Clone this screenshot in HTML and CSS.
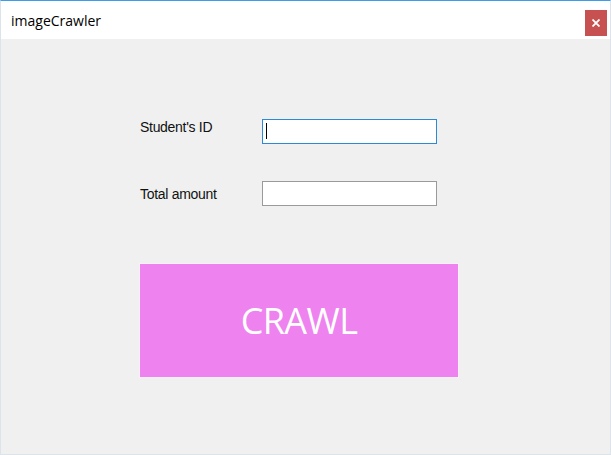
FILE: index.html
```html
<!DOCTYPE html>
<html lang="en">
<head>
    <meta charset="UTF-8">
    <title>imageCrawler</title>
    <link rel="stylesheet" href="styles.css">
</head>
<body>
    <div class="window">
        <div class="title-bar">
            <span class="title-text">imageCrawler</span>
            <button class="close-button" aria-label="Close">
                <svg width="8" height="8" viewBox="0 0 8 8">
                    <path d="M0.5 0.5 L7.5 7.5 M7.5 0.5 L0.5 7.5" stroke="#fff" stroke-width="1.8"/>
                </svg>
            </button>
        </div>

        <div class="client">
            <div class="form">
                <label class="field-label">Student's ID</label>
                <div class="textbox focused"><span class="caret"></span></div>

                <label class="field-label lower">Total amount</label>
                <div class="textbox"></div>
            </div>

            <button class="crawl-button">CRAWL</button>
        </div>
    </div>
</body>
</html>
```

FILE: styles.css
```css
* {
    margin: 0;
    padding: 0;
    box-sizing: border-box;
}

body {
    width: 611px;
    height: 455px;
    overflow: hidden;
    background: #f0f0f0;
    font-family: "Liberation Sans", Arial, sans-serif;
}

.window {
    width: 611px;
    height: 455px;
    display: flex;
    flex-direction: column;
    border: 1px solid #dce3ea;
    border-top-color: #3c9ee8;
    background: #f0f0f0;
}

.title-bar {
    height: 38px;
    flex-shrink: 0;
    background: #fff;
    display: flex;
    align-items: center;
    justify-content: space-between;
}

.title-text {
    padding-left: 10px;
    font-family: "Open Sans", sans-serif;
    font-size: 14px;
    color: #000;
}

.close-button {
    width: 22px;
    height: 26px;
    margin-right: 3px;
    align-self: flex-start;
    margin-top: 9px;
    background: #c75050;
    border: none;
    display: flex;
    align-items: center;
    justify-content: center;
}

.client {
    flex: 1;
    padding: 80px 0 0 138px;
}

.form {
    display: grid;
    grid-template-columns: 123px 175px;
    grid-auto-rows: 25px;
    row-gap: 37px;
}

.field-label {
    font-size: 14px;
    line-height: 16px;
    letter-spacing: -0.3px;
    color: #111;
    padding-left: 1px;
}

.field-label.lower {
    padding-top: 5px;
}

.textbox {
    height: 25px;
    background: #fff;
    border: 1px solid #9a9a9a;
    padding: 3px 0 0 3px;
}

.textbox.focused {
    border-color: #2a8ad8;
}

.caret {
    display: block;
    width: 1px;
    height: 16px;
    background: #000;
}

.crawl-button {
    display: block;
    margin-top: 57px;
    width: 320px;
    height: 115px;
    background: #ee82ee;
    border: 1px solid #fbf0fb;
    color: #fff;
    font-family: "Open Sans", sans-serif;
    font-size: 36px;
    letter-spacing: -0.6px;
}
```
